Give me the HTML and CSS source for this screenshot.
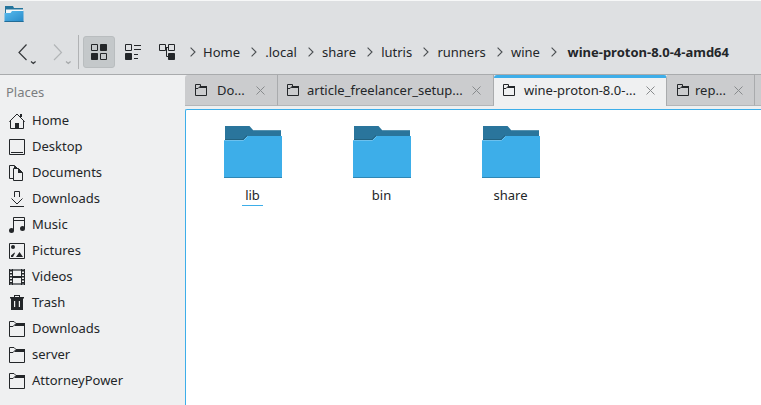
FILE: index.html
```html
<!DOCTYPE html>
<html lang="en">
<head>
<meta charset="utf-8">
<title>wine-proton-8.0-4-amd64</title>
<link rel="stylesheet" href="styles.css">
</head>
<body>
<svg width="0" height="0" class="defs" aria-hidden="true">
  <symbol id="chev" viewBox="0 0 6 10"><path d="M.6.6 5 5 .6 9.4" fill="none" stroke="#4b4f52" stroke-width="1.1"/></symbol>
  <symbol id="close" viewBox="0 0 9 9"><path d="M.5.5l8 8M8.500.5l-8 8" fill="none" stroke="#888b8d" stroke-width="1"/></symbol>
  <symbol id="tabfolder" viewBox="0 0 12 12"><path d="M5.500 2V.5h-5v11h11V2M1 4.500h2l2-2" fill="none" stroke="#232629"/><path d="M5 2h7v2H4z" fill="#232629"/></symbol>
  <symbol id="folder" viewBox="0 0 16 16"><path d="M6.500 2 5 .5H.5v15h15V2M1 5.500h3l3-3" fill="none" stroke="#232629"/><path d="M7 2h9v3H5.500z" fill="#232629"/></symbol>
  <symbol id="bigfolder" viewBox="0 0 58 52">
    <path d="M1 0h24.500l3.500 4h28v12H1z" fill="#2a759c"/>
    <path d="M29 4h28v1H29z" fill="#5591af"/>
    <path d="M1 13h18l4-4v4l-3 2H1z" fill="#22617f"/>
    <path d="M0 14h19.500l4-4H58v42H0z" fill="#3daee9"/>
    <path d="M0 14.500h19.500l4-4" fill="none" stroke="#6cc1ee"/>
    <path d="M0 51h58v1H0z" fill="#2f87b5"/>
  </symbol>
</svg>
<div class="window">
  <header class="header">
    <div class="titlebar">
      <svg width="20" height="18" viewBox="0 0 20 18">
        <defs><linearGradient id="g" x1="0" y1="0" x2="1" y2="1"><stop offset="0" stop-color="#59bbee"/><stop offset="1" stop-color="#2689c8"/></linearGradient></defs>
        <path d="M1 1h8l1 2h9v8H1z" fill="#24749c"/><path d="M2 4.500h17V9H2z" fill="#f4f8fa"/>
        <path d="M.5 8h6l1.500-2h11.500v11H.5z" fill="url(#g)"/><path d="M.5 16.500h19" stroke="#236c96"/>
      </svg>
    </div>
    <div class="toolbar">
      <svg class="nav" width="18" height="22" viewBox="0 0 18 22"><path d="M8.500 1.500 1 9.500l7.500 7.500" fill="none" stroke="#35383b" stroke-width="1.200"/><path d="m13 18.500 2.300 2 2.300-2" fill="none" stroke="#35383b" stroke-width="1.300"/></svg>
      <svg class="nav forward" width="18" height="22" viewBox="0 0 18 22"><path d="m1 1.500 7.500 8L1 17" fill="none" stroke="#b2b5b7" stroke-width="1.200"/><path d="m13 18.500 2.300 2 2.300-2" fill="none" stroke="#a5a8aa" stroke-width="1.300"/></svg>
      <div class="divider"></div>
      <div class="view active"><svg width="16" height="16" viewBox="0 0 16 16" fill="none" stroke="#232629"><path d="M.5.5h6v6h-6zM9.500 9.500h6v6h-6z"/><path d="M9.500.5h6v6h-6zM.5 9.500h6v6h-6z" fill="#232629"/></svg></div>
      <div class="view"><svg width="16" height="16" viewBox="0 0 16 16" fill="none" stroke="#232629"><path d="M.5.5h6v6h-6zM9 1.500h7M9 5.500h7M9 10.500h4M9 14.500h4"/><path d="M.5 9.500h6v6h-6z" fill="#232629"/></svg></div>
      <div class="view"><svg width="16" height="16" viewBox="0 0 16 16" fill="none" stroke="#232629"><path d="M.5.5h6v6h-6zM9.500.5h6v6h-6zM7 3.500h2M7.500 4v8.500H9"/><path d="M9.500 9.500h6v6h-6z" fill="#232629"/></svg></div>
      <nav class="crumbs">
        <svg class="chev"><use href="#chev"/></svg><span>Home</span>
        <svg class="chev"><use href="#chev"/></svg><span>.local</span>
        <svg class="chev"><use href="#chev"/></svg><span>share</span>
        <svg class="chev"><use href="#chev"/></svg><span>lutris</span>
        <svg class="chev"><use href="#chev"/></svg><span>runners</span>
        <svg class="chev"><use href="#chev"/></svg><span>wine</span>
        <svg class="chev"><use href="#chev"/></svg><b>wine-proton-8.0-4-amd64</b>
      </nav>
    </div>
  </header>
  <div class="body">
    <aside class="places">
      <h2>Places</h2>
      <ul>
        <li><svg viewBox="0 0 16 16"><path d="M1.500 8v7.500h13V8M.3 8.700 8 1l7.700 7.700" fill="none" stroke="#232629"/><path d="M6 10h4v5H6zM11 1h2v3h-2z" fill="#232629"/></svg>Home</li>
        <li><svg viewBox="0 0 16 16"><path d="M.5.5h15v15H.5zM2 13.500h12" fill="none" stroke="#232629"/></svg>Desktop</li>
        <li><svg viewBox="0 0 16 16"><path d="M4 13.500H.5V.5h5L8 3M4.500 3.500h5l4 4v8h-9z" fill="none" stroke="#232629"/><path d="M5 .5 9 4H5zM9 3l5 5H9z" fill="#232629"/></svg>Documents</li>
        <li><svg viewBox="0 0 16 16"><path d="M5.500 6V.5h5V6M2.500 7.500 8 13l5.500-5.500M1 15.500h14" fill="none" stroke="#232629"/></svg>Downloads</li>
        <li><svg viewBox="0 0 16 16"><path d="M4.500 14V.5h11V12M5 3.500h10" fill="none" stroke="#232629"/><circle cx="2.500" cy="13.500" r="2.500" fill="#232629"/><circle cx="13.500" cy="11.500" r="2.500" fill="#232629"/></svg>Music</li>
        <li><svg viewBox="0 0 16 16"><path d="M.5.5h15v15H.5z" fill="none" stroke="#232629"/><circle cx="4" cy="4" r="2" fill="#232629"/><path d="m7 14 3.500-5 3.500 5zM2 14v-1.500L5.500 9.500 6 10l-2 4z" fill="#232629"/></svg>Pictures</li>
        <li><svg viewBox="0 0 16 16"><path d="M0 1h16M0 15h16" stroke="#73777a" stroke-width="2"/><path d="M4 8h8" stroke="#232629" stroke-width="2"/><path d="M.5 0v16M3.500 0v16M12.500 0v16M15.500 0v16" stroke="#232629"/><path d="M2 1v15M14 1v15" stroke="#232629" stroke-width="2" stroke-dasharray="1.500"/></svg>Videos</li>
        <li><svg viewBox="0 0 16 16"><path d="M1 2h4V0h6v2h4v1.500h-1V15H2V3.500H1zM6 1v1h4V1zM5 6v6h1.200V6zM9.800 6v6H11V6z" fill="#232629" fill-rule="evenodd"/></svg>Trash</li>
        <li><svg><use href="#folder"/></svg>Downloads</li>
        <li><svg><use href="#folder"/></svg>server</li>
        <li><svg><use href="#folder"/></svg>AttorneyPower</li>
      </ul>
    </aside>
    <main class="main">
      <div class="tabs">
        <div class="tab t1"><svg class="ti"><use href="#tabfolder"/></svg><span>Do...</span><svg class="x"><use href="#close"/></svg></div>
        <div class="tab t2"><svg class="ti"><use href="#tabfolder"/></svg><span>article_freelancer_setup...</span><svg class="x"><use href="#close"/></svg></div>
        <div class="tab t3 current"><svg class="ti"><use href="#tabfolder"/></svg><span>wine-proton-8.0-...</span><svg class="x"><use href="#close"/></svg></div>
        <div class="tab t4"><svg class="ti"><use href="#tabfolder"/></svg><span>rep...</span><svg class="x"><use href="#close"/></svg></div>
        <div class="tab rest"></div>
      </div>
      <div class="files">
        <div class="file"><svg><use href="#bigfolder"/></svg><span class="selected">lib</span></div>
        <div class="file"><svg><use href="#bigfolder"/></svg><span>bin</span></div>
        <div class="file"><svg><use href="#bigfolder"/></svg><span>share</span></div>
      </div>
    </main>
  </div>
</div>
</body>
</html>
```
FILE: styles.css
```css
* { box-sizing: border-box; }
body { margin: 0; overflow: hidden; font: 13px/18px "Noto Sans", sans-serif; color: #232629; }
svg { display: block; flex: none; }
.defs { position: absolute; }
.window { height: 405px; display: flex; flex-direction: column; background: #eff0f1; }
.header { height: 75px; background: #dee0e2; border-top: 1px solid #f7f8f8; border-bottom: 1px solid #a9abad; }
.titlebar { height: 29px; padding: 4px 0 0 4px; }
.toolbar { height: 44px; display: flex; align-items: center; white-space: nowrap; }
.nav { margin: 4px 0 0 18px; }
.forward { margin-left: 17px; }
.divider { width: 1px; height: 34px; background: #b0b2b4; margin: 0 4px 0 7px; }
.view { width: 32px; height: 32px; margin-right: 2px; border-radius: 3px; display: grid; place-items: center; }
.view.active { background: #c4c8ca; border: 1px solid #b9bdbf; }
.crumbs { display: flex; align-items: center; margin-left: 5px; }
.chev { width: 6px; height: 10px; margin: 0 8.1px 0 11.1px; }
.chev:first-child { margin: 0 7px 0 0; }
.crumbs b { margin-left: 2.4px; }
.body { flex: 1; display: flex; min-height: 0; }
.places { width: 185px; }
.places h2 { margin: 8px 0 6px 6px; font-size: 13px; font-weight: 400; color: #7b7e80; }
.places ul { margin: 0; padding: 0; list-style: none; }
.places li { height: 26px; display: flex; align-items: center; gap: 7px; padding-left: 9px; }
.places li svg { width: 16px; height: 16px; margin-top: 1px; }
.main { flex: 1; min-width: 0; display: flex; flex-direction: column; }
.tabs { display: flex; height: 31px; margin-bottom: 3px; }
.tab { flex: none; display: flex; align-items: center; background: #cbccce; border-right: 1px solid #a9abad; border-bottom: 1px solid #b4b6b8; padding-left: 10px; white-space: nowrap; }
.t1 { width: 93px; border-top-left-radius: 3px; }
.t2 { width: 216px; padding-left: 9px; }
.t3 { width: 173px; padding-left: 9px; }
.t4 { width: 88px; }
.tab.rest { flex: 1; border-right: 0; padding: 0; }
.current { background: #eff0f1; border-top: 3px solid #3daee9; border-bottom: 0; border-radius: 3px 3px 0 0; padding-bottom: 4px; }
.ti { width: 12px; height: 12px; margin-right: 9px; }
.t1 .ti { margin-right: 10px; }
.t2 .ti { margin-right: 8px; }
.t4 .ti { margin-right: 6px; }
.x { width: 9px; height: 9px; margin: 0 11px 0 auto; }
.t1 .x, .t2 .x { margin-right: 12px; }
.files { flex: 1; display: flex; align-items: flex-start; padding: 16px 0 0 2px; background: #fff; border-top: 1px solid #3daee9; border-left: 1px solid #3daee9; border-top-left-radius: 2px; }
.file { width: 129px; display: flex; flex-direction: column; align-items: center; gap: 8px; }
.file svg { width: 58px; height: 52px; }
.selected { padding: 0 3px 1px; border-bottom: 1px solid #3daee9; }
```
